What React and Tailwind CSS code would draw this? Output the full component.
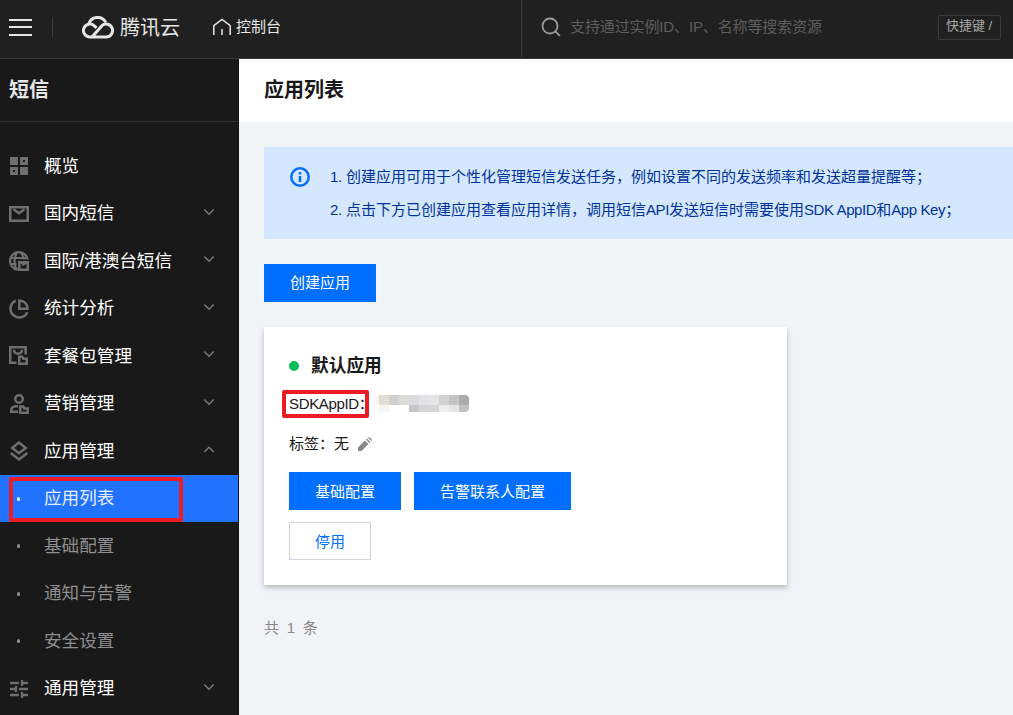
import React from 'react';

// Sidebar icons, all on a 20x20 box
const OverviewIcon = () => (
  <svg width="20" height="20" viewBox="0 0 20 20" fill="currentColor">
    <path d="M1 1h8v8H1z" />
    <path d="M11 1h8v8h-8zM14 4v2h2V4z" fillRule="evenodd" />
    <path d="M1 11h8v8H1zM4 14v2h2v-2z" fillRule="evenodd" />
    <path d="M11 11h8v8h-8z" />
  </svg>
);

const MailIcon = () => (
  <svg width="20" height="20" viewBox="0 0 20 20" fill="none" stroke="currentColor" strokeWidth="2.5">
    <path d="M1.250 3.250h17.500v13.500H1.250z" />
    <path d="M4.500 5.200L10 9.300l5.500-4.100" />
  </svg>
);

const GlobalIcon = () => (
  <svg width="20" height="20" viewBox="0 0 20 20" fill="none" stroke="currentColor" strokeWidth="2.200">
    <path d="M18.700 8.500A8.900 8.900 0 1 0 8.500 18.800" />
    <path d="M8.200 18.600C6 16.500 5.500 13 5.500 10s.7-6.300 3-8.700M11.500 1.300c2 2 3 4.500 3.200 7.200M1 7h17.500M1 13h6.500" />
    <path d="M9 10h11v10H9zM11.500 12.500v5h6v-5l-3 2.600z" fill="currentColor" stroke="none" fillRule="evenodd" />
    <path d="M12.800 12.300h3.400l-1.700 1.300z" fill="currentColor" stroke="none" />
  </svg>
);

const StatsIcon = () => (
  <svg width="20" height="20" viewBox="0 0 20 20" fill="none" stroke="currentColor" strokeWidth="2.500">
    <path d="M6.800 1.700A8.750 8.750 0 1 0 18.300 13.200" />
    <path d="M10.300 1.400v8.300h8.300a8.300 8.300 0 0 0-8.300-8.300z" />
  </svg>
);

const PackageIcon = () => (
  <svg width="20" height="20" viewBox="0 0 20 20" fill="none" stroke="currentColor" strokeWidth="2.500">
    <path d="M7.500 16.800H1.250V1.250h15.400V8.500" />
    <path d="M5 3.800c0 2.700 1.700 3.900 4 3.900s4-1.200 4-3.900" />
    <path d="M10.200 10.800v6.900h7.600v-4.900h-3.500l-1-2z" />
  </svg>
);

const MarketingIcon = () => (
  <svg width="20" height="20" viewBox="0 0 20 20" fill="none" stroke="currentColor" strokeWidth="2.500">
    <circle cx="10" cy="5" r="3.750" />
    <path d="M9 12.200H6.400A4.200 4.200 0 0 0 2.200 16.400v1.400H9" />
    <path d="M11.200 12.500v6.200h7.500v-4.300h-3.500l-1-1.900z" />
  </svg>
);

const LayersIcon = () => (
  <svg width="20" height="20" viewBox="0 0 20 20" fill="none" stroke="currentColor" strokeWidth="2.500">
    <path d="M10 1.600L3.200 6.900 10 12.200l6.800-5.300z" />
    <path d="M1.700 12L10 18.400l8.300-6.400" />
  </svg>
);

const SettingsIcon = () => (
  <svg width="20" height="20" viewBox="0 0 20 20" fill="none" stroke="currentColor" strokeWidth="2.300">
    <path d="M1 4h9M12 4h7M13 1v6M1 10h7M10 10h9M7 7v6M1 16h9M12 16h7M13 13v6" />
  </svg>
);

const CloudLogo = () => (
  <svg width="34" height="26" viewBox="0 0 34 26" fill="none" stroke="currentColor" strokeWidth="3" className="shrink-0">
    <path d="M7.700 10.600A9.200 9.200 0 0 1 24.800 8.400" />
    <path d="M11.200 22.900H9a6.400 6.400 0 1 1 4.300-11l2.200 2" />
    <path d="M11 22.900h14.200a6.400 6.400 0 1 0-4.500-11z" strokeLinejoin="round" />
  </svg>
);

const menu = [
  { label: '概览', icon: OverviewIcon },
  { label: '国内短信', icon: MailIcon, arrow: 'down' },
  { label: '国际/港澳台短信', icon: GlobalIcon, arrow: 'down' },
  { label: '统计分析', icon: StatsIcon, arrow: 'down' },
  { label: '套餐包管理', icon: PackageIcon, arrow: 'down' },
  { label: '营销管理', icon: MarketingIcon, arrow: 'down' },
  {
    label: '应用管理',
    icon: LayersIcon,
    arrow: 'up',
    children: ['应用列表', '基础配置', '通知与告警', '安全设置'],
  },
  { label: '通用管理', icon: SettingsIcon, arrow: 'down' },
];

const activeItem = '应用列表';

// Masked app id, one colour per block
const maskTop = ['#e5ddd5', '#d0d0d0', '#dddcd9', '#d9dbdf', '#e1e3e6', '#e5e5e5', '#d2d2d2', '#c4c4c4', '#acacac'];
const maskBottom = ['#f5f5f5', '#ffffff', '#ffffff', '#c5c6ca', '#d4d3d5', '#d5d5d5', '#eeedee', '#e5e5e5', '#c2c2c2'];

const Chevron = ({ up }) => (
  <svg width="12" height="8" viewBox="0 0 12 8" fill="none" stroke="#7c7c7c" strokeWidth="1.4" className="mb-1 shrink-0">
    <path d={up ? 'M1.300 7L6 2.300 10.700 7' : 'M1.300 1.500L6 6.200l4.700-4.700'} />
  </svg>
);

const Header = () => (
  <header className="flex h-[59px] shrink-0 border-b border-[#3a3a3a] bg-[#202020] text-[#e6e6e6]">
    <div className="flex h-[54px] w-[521px] items-center pl-[9px]">
      <div className="flex w-[23px] flex-col gap-[5.500px]">
        <span className="h-0.5 bg-[#e6e6e6]"></span>
        <span className="h-0.5 bg-[#e6e6e6]"></span>
        <span className="h-0.5 bg-[#e6e6e6]"></span>
      </div>
      <div className="ml-5 h-5 w-px bg-[#3a3a3a]"></div>
      <div className="ml-7 flex items-center gap-[5px]">
        <CloudLogo />
        <span className="pt-0.5 text-[20px] leading-none">腾讯云</span>
      </div>
      <div className="ml-8 flex items-center gap-1">
        <svg width="20" height="18" viewBox="0 0 20 18" fill="none" stroke="currentColor" strokeWidth="1.500">
          <path d="M1.800 17V7.600L10 1.400l8.200 6.200V17M10 11v6" />
        </svg>
        <span className="text-[15px]">控制台</span>
      </div>
    </div>
    <div className="flex flex-1 border-l border-[#3a3a3a]">
      <div className="flex h-[54px] flex-1 items-center pr-3 pl-[19px]">
        <svg width="20" height="20" viewBox="0 0 20 20" fill="none" stroke="#9a9a9a" strokeWidth="1.800">
          <circle cx="9" cy="9" r="7.500" />
          <path d="M14.300 14.300l4.700 4.500" />
        </svg>
        <span className="ml-[9px] text-[15px] tracking-[-0.12px] text-[#5e5e5e]">支持通过实例ID、IP、名称等搜索资源</span>
        <span className="ml-auto flex h-[25px] w-[63px] items-center justify-center rounded-xs border border-[#3a3a3a] pr-px pb-[3px] text-[13px] whitespace-nowrap text-[#a8a8a8]">
          快捷键 /
        </span>
      </div>
    </div>
  </header>
);

const Sidebar = () => (
  <aside className="flex w-[239px] shrink-0 flex-col border-r border-[#141414] bg-[#191919]">
    <div className="flex h-[63px] shrink-0 items-center border-b border-[#333333] pb-px pl-[9px] text-[20px] font-bold text-[#e6e6e6]">
      短信
    </div>
    <nav className="mt-[20.400px]">
      {menu.map((item) => (
        <div key={item.label}>
          <div className="flex h-[47.500px] items-center pr-[23px] pl-[9px] text-[#6f6f6f]">
            <item.icon />
            <span className="ml-[15px] flex-1 text-[17.600px] whitespace-nowrap text-white">{item.label}</span>
            {item.arrow && <Chevron up={item.arrow === 'up'} />}
          </div>
          {item.children?.map((child) => (
            <div
              key={child}
              className={`relative flex h-[47.500px] items-center pl-[17px] ${
                child === activeItem ? 'bg-[#2173ff] text-[#e3edff]' : 'text-[#8f8f8f]'
              }`}
            >
              <span className="h-1 w-[3px] rounded-xs bg-current"></span>
              <span className="ml-6 text-[17.600px]">{child}</span>
              {child === activeItem && (
                <div className="absolute top-[2px] left-[9px] h-[45px] w-[174px] rounded-xs border-4 border-[#ed1c24]"></div>
              )}
            </div>
          ))}
        </div>
      ))}
    </nav>
  </aside>
);

const AppCard = () => (
  <div className="mt-[25px] h-[258px] w-[523px] bg-white px-[25px] pt-[25px] shadow-[0_2.500px_5px_rgba(54,58,80,0.32)]">
    <div className="flex h-7 items-center">
      <span className="h-2.5 w-2.5 rounded-full bg-[#0abf5b]"></span>
      <span className="ml-3 text-[17.700px] font-bold">默认应用</span>
    </div>
    <div className="mt-[10px] flex h-7 items-center">
      <div className="relative w-[85px] whitespace-nowrap">
        <span className="tracking-[-0.350px]">SDKAppID</span>：
        <div className="absolute -top-[3px] -left-[7px] h-7 w-[87px] rounded-xs border-4 border-[#ed1c24]"></div>
      </div>
      <div className="flex flex-col pb-px">
        <div className="flex">
          <span className="h-2.5 w-[5px] rounded-l-full bg-[#f3f3f3]"></span>
          {maskTop.map((color, i) => (
            <span key={i} className="h-2.5 w-2.5 last:rounded-tr-sm" style={{ background: color }}></span>
          ))}
        </div>
        <div className="flex pl-[5px]">
          {maskBottom.map((color, i) => (
            <span key={i} className="h-[7px] w-2.5 last:rounded-br-sm" style={{ background: color }}></span>
          ))}
        </div>
      </div>
    </div>
    <div className="mt-3 flex h-7 items-center">
      <span>标签：无</span>
      <svg width="14" height="14" viewBox="0 0 14 14" fill="#888888" className="ml-[9px]">
        <path d="M0 10.500v3.500h3.500l7-7L7 3.500zM8 2.500l3.500 3.500.9-.9L8.900 1.600zM10 .6L13.400 4l.4-.4a.8.8 0 0 0 0-1.100L11.500.2a.8.8 0 0 0-1.100 0z" />
      </svg>
    </div>
    <div className="mt-3.5 flex gap-[13px]">
      <button className="h-[38px] w-28 bg-[#006eff] pt-0.5 text-white">基础配置</button>
      <button className="h-[38px] w-[157px] bg-[#006eff] pt-0.5 text-white">告警联系人配置</button>
    </div>
    <button className="mt-3 h-[38px] w-[82px] border border-[#cfd5de] bg-white pt-0.5 text-[#006eff]">停用</button>
  </div>
);

const App = () => {
  return (
    <div className="flex h-[715px] w-[1013px] flex-col overflow-hidden bg-[#f2f3f7] font-['Liberation_Sans','Noto_Sans_CJK_SC',sans-serif] text-[15px] text-[#181818]">
      <Header />
      <div className="flex min-h-0 flex-1">
        <Sidebar />
        <main className="flex-1">
          <div className="flex h-[63px] items-center bg-white pb-px pl-[25px] text-[20px] font-bold">应用列表</div>
          <div className="pt-[25px] pl-[25px]">
            <div className="flex h-[92px] bg-[#d5e7ff] pt-[13px] pl-[26px] text-[#003399]">
              <svg width="20" height="20" viewBox="0 0 20 20" fill="none" stroke="#006eff" strokeWidth="2.500" className="mt-[7px]">
                <circle cx="10" cy="10" r="8.700" />
                <path d="M10 5v2.500M10 9v6" />
              </svg>
              <div className="ml-5 leading-[33px] whitespace-nowrap">
                <p>
                  <span className="tracking-[-0.250px]">1. </span>创建应用可用于个性化管理短信发送任务，例如设置不同的发送频率和发送超量提醒等；
                </p>
                <p>
                  <span className="tracking-[-0.250px]">2. </span>点击下方已创建应用查看应用详情，调用短信
                  <span className="tracking-[-0.400px]">API</span>发送短信时需要使用
                  <span className="tracking-[-0.400px]">SDK AppID</span>和<span className="tracking-[-0.400px]">App Key</span>；
                </p>
              </div>
            </div>
            <button className="mt-[25px] block h-[38px] w-28 bg-[#006eff] text-white">创建应用</button>
            <AppCard />
            <div className="mt-8 text-[15px] [word-spacing:3.500px] text-[#888888]">共 1 条</div>
          </div>
        </main>
      </div>
    </div>
  );
};

export default App;
